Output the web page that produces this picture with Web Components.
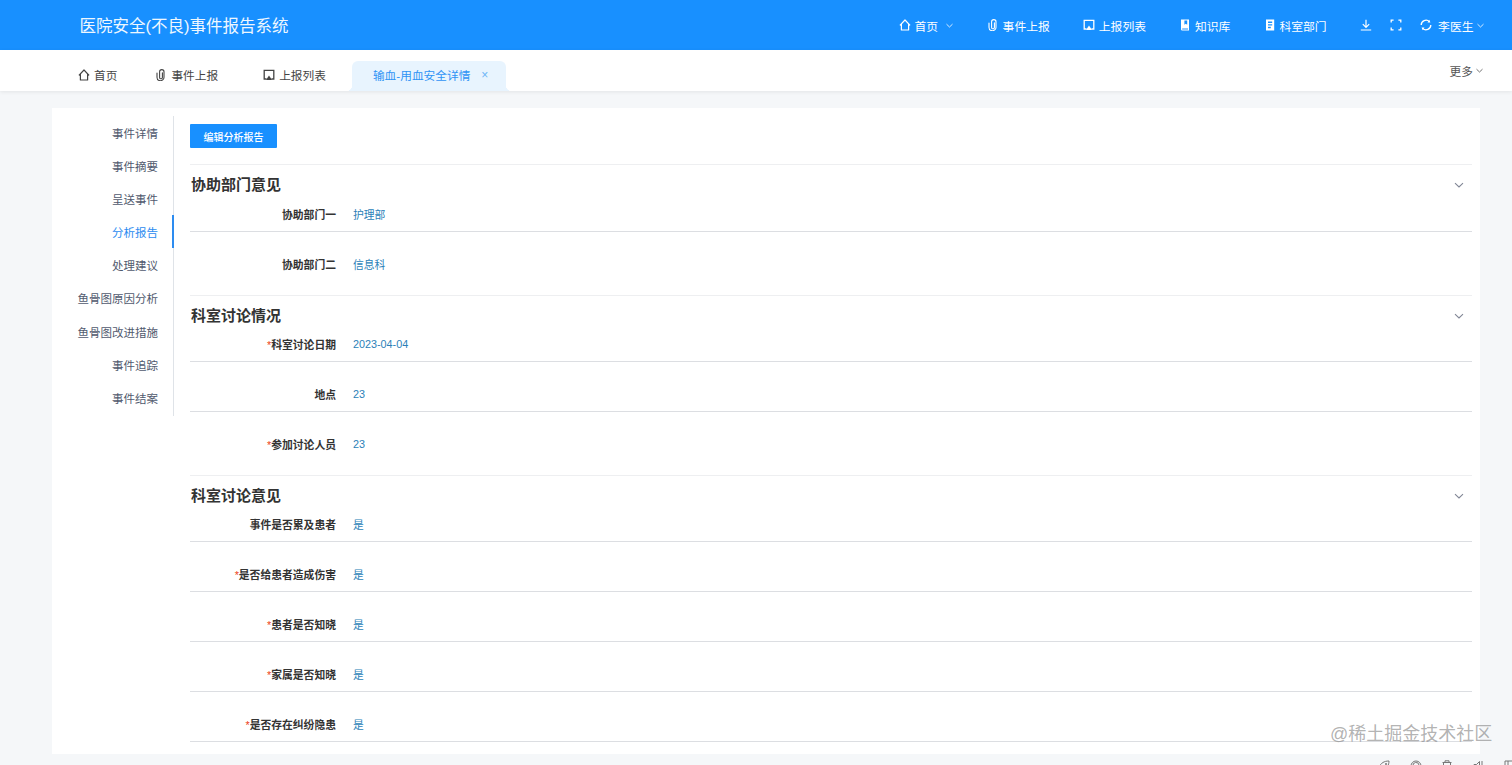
<!DOCTYPE html>
<html lang="zh-CN">
<head>
<meta charset="UTF-8">
<title>事件详情</title>
<style>
  html, body { margin: 0; height: 100%; overflow: hidden; }
  body { font-family: "Liberation Sans", "Noto Sans CJK SC", sans-serif; background: #f5f7f9; color: #333; }
</style>
</head>
<body>
<report-page>
  <app-header slot="header"></app-header>
  <tab-bar slot="tabs"></tab-bar>
  <anchor-nav slot="nav"></anchor-nav>

  <action-button>编辑分析报告</action-button>

  <form-section title="协助部门意见" class="first">
    <form-row label="协助部门一">护理部</form-row>
    <form-row label="协助部门二" last>信息科</form-row>
  </form-section>
  <form-section title="科室讨论情况">
    <form-row label="科室讨论日期" required>2023-04-04</form-row>
    <form-row label="地点">23</form-row>
    <form-row label="参加讨论人员" required last>23</form-row>
  </form-section>
  <form-section title="科室讨论意见">
    <form-row label="事件是否累及患者">是</form-row>
    <form-row label="是否给患者造成伤害" required>是</form-row>
    <form-row label="患者是否知晓" required>是</form-row>
    <form-row label="家属是否知晓" required>是</form-row>
    <form-row label="是否存在纠纷隐患" required>是</form-row>
  </form-section>
</report-page>

<script>
const ICONS = {
  home: '<path d="M.9 6.4 6 1l5.1 5.4M2.4 5v6h7.2V5" fill="none" stroke="currentColor" stroke-width="1.2" stroke-linejoin="round"/>',
  clip: '<path d="M7.4 3.8v4.6a1.4 1.4 0 0 1-2.8 0V2.8a2.2 2.2 0 0 1 4.4 0v5.4a3.5 3.5 0 0 1-7 0V4" fill="none" stroke="currentColor" stroke-width="1.1" stroke-linecap="round"/>',
  screen: '<path d="M3.6 10H1.2V1.4h9.6V10H8.4" fill="none" stroke="currentColor" stroke-width="1.3"/><path d="M6 6.6 9 11H3z" fill="currentColor"/>',
  book: '<path d="M2 .6h8v11H3.2A1.3 1.3 0 0 1 2 10.3zM5.4 1.6v4.2l1.4-1 1.4 1V1.6zM3.2 9.4v1h5.8v-1z" fill="currentColor" fill-rule="evenodd"/>',
  doc: '<path d="M2 .6h8.2v11H2zM4 2.6v1.4h4.2V2.6zM4 5.2v1.4h4.2V5.2zM4 7.8v1.4h2.8V7.8z" fill="currentColor" fill-rule="evenodd"/>',
  download: '<path d="M6 .8v7.6M2.8 5.2 6 8.4l3.2-3.2M.8 11h10.4" fill="none" stroke="currentColor" stroke-width="1.2"/>',
  full: '<path d="M1.2 3.6V1.2h2.4M8.4 1.2h2.4v2.4M10.8 8.4v2.4H8.4M3.6 10.8H1.2V8.4" fill="none" stroke="currentColor" stroke-width="1.3"/>',
  sync: '<path d="M1.2 6A4.8 4.8 0 0 1 9.4 2.6M10.800 6A4.8 4.8 0 0 1 2.600 9.400" fill="none" stroke="currentColor" stroke-width="1.3"/><path d="M9.300 .8l1.100 2.800-2.900-.2zM2.700 11.200 1.600 8.400l2.900.2z" fill="currentColor"/>',
  down: '<path d="M2 4.2 6 8l4-3.8" fill="none" stroke="currentColor" stroke-width="1.1"/>',
  rocket: '<path d="M1 7C3 3 6 1 11 1 11 5 9 8 5 10zM7.500 3.500h1v1h-1z" fill="none" stroke="currentColor"/>',
  badge: '<circle cx="6" cy="6" r="5" fill="none" stroke="currentColor"/><path d="M3 6a3 3 0 0 1 6-1" fill="none" stroke="currentColor"/>',
  trash: '<path d="M4 2V.8h4V2M1.500 2.500h9M2.500 2.500V11h7V2.500M5 5v4M7 5v4" fill="none" stroke="currentColor"/>',
  sound: '<path d="M1 4.500h2.500L6.500 1.500V11L3.500 8H1zM9 1v8" fill="none" stroke="currentColor"/>',
  panel: '<path d="M1 1h10v10H1zM4 1v10" fill="none" stroke="currentColor"/>'
};
const icon = (name, size = 12) =>
  `<svg width="${size}" height="${size}" viewBox="0 0 12 12" style="display:block;flex:none">${ICONS[name]}</svg>`;

class ReportPage extends HTMLElement {
  constructor() {
    super();
    this.attachShadow({mode: 'open'}).innerHTML = `
      <style>
        :host { display: flex; flex-direction: column; height: 765px; overflow: hidden; position: relative; }
        .main {
          flex: none; height: 646px; margin: 17px 32px 0 52px; padding: 8px;
          box-sizing: border-box; background: #fff; display: flex; overflow: hidden;
        }
        .body { flex: 1; padding: 8px 0 0 16px; min-width: 0; }
        .foot { flex: 1; display: flex; justify-content: flex-end; gap: 19.5px; padding: 6px 0 0; margin-right: -4px; color: #777; overflow: hidden; }
        .mark {
          position: absolute; left: 1330px; top: 723px; font-size: 18px; line-height: 22px;
          color: rgba(130,130,130,.62); white-space: nowrap;
        }
      </style>
      <slot name="header"></slot>
      <slot name="tabs"></slot>
      <div class="main">
        <slot name="nav"></slot>
        <div class="body"><slot></slot></div>
      </div>
      <div class="foot">
        ${['rocket','badge','trash','sound','panel'].map(n => icon(n)).join('')}
      </div>
      <div class="mark">@稀土掘金技术社区</div>`;
  }
}

class AppHeader extends HTMLElement {
  constructor() {
    super();
    const items = [['home','首页',true],['clip','事件上报'],['screen','上报列表'],['book','知识库'],['doc','科室部门']];
    this.attachShadow({mode: 'open'}).innerHTML = `
      <style>
        :host { display: flex; flex: none; align-items: center; height: 50px; background: #1890ff; color: #fff; padding: 0 27px 0 79.5px; }
        h1 { margin: 0 0 1px; font-size: 16.5px; font-weight: 400; color: #eef7ff; }
        nav { margin-left: auto; display: flex; align-items: center; gap: 33.5px; font-size: 11.8px; }
        a { display: flex; align-items: center; gap: 3.5px; }
        .chev { margin-left: 3px; }
        .tools { display: flex; align-items: center; gap: 18px; }
        .user { display: flex; align-items: center; gap: 6px; }
        .user .chev { margin-left: -3.5px; }
      </style>
      <h1>医院安全(不良)事件报告系统</h1>
      <nav>
        ${items.map(([i, t, c]) => `<a>${icon(i)}${t}${c ? `<span class="chev">${icon('down', 9)}</span>` : ''}</a>`).join('')}
        <div class="tools">
          ${icon('download')}${icon('full')}
          <div class="user">${icon('sync')}李医生<span class="chev">${icon('down', 9)}</span></div>
        </div>
      </nav>`;
  }
}

class TabBar extends HTMLElement {
  constructor() {
    super();
    this.attachShadow({mode: 'open'}).innerHTML = `
      <style>
        :host {
          display: flex; flex: none; align-items: flex-end; height: 41px; background: #fff; padding-left: 78px;
          font-size: 11.7px; color: #444; box-shadow: 0 1px 4px rgba(0,0,0,.08); position: relative;
        }
        .tab { height: 30px; display: flex; align-items: center; gap: 4px; padding-bottom: 3px; box-sizing: border-box; }
        .a { margin-right: 38px; }
        .b { margin-right: 45px; }
        .c { margin-right: 26px; }
        .on {
          position: relative; background: #e8f4fe; color: #2f93f5; padding-left: 21px; width: 154px;
          border-radius: 6px 6px 0 0; gap: 11px;
        }
        .on::before, .on::after { content: ""; position: absolute; bottom: 0; width: 6px; height: 6px; }
        .on::before { left: -6px; background: radial-gradient(circle at 0 0, transparent 6px, #e8f4fe 6.5px); }
        .on::after { right: -6px; background: radial-gradient(circle at 100% 0, transparent 6px, #e8f4fe 6.5px); }
        .x { font-size: 12px; color: #6cb4f7; line-height: 1; }
        .more { margin-left: auto; align-self: center; margin-right: 28px; display: flex; align-items: center; gap: 2px; color: #555; }
      </style>
      <div class="tab a">${icon('home')}首页</div>
      <div class="tab b">${icon('clip')}事件上报</div>
      <div class="tab c">${icon('screen')}上报列表</div>
      <div class="tab on">输血-用血安全详情<span class="x">×</span></div>
      <div class="more">更多${icon('down', 9)}</div>`;
  }
}

class AnchorNav extends HTMLElement {
  constructor() {
    super();
    const items = ['事件详情','事件摘要','呈送事件','分析报告','处理建议','鱼骨图原因分析','鱼骨图改进措施','事件追踪','事件结案'];
    this.attachShadow({mode: 'open'}).innerHTML = `
      <style>
        :host { display: block; flex: none; width: 113px; height: 300px; border-right: 1px solid #dfe3e8; font-size: 11.5px; color: #515a6e; }
        div { height: 33.1px; line-height: 37px; text-align: right; padding-right: 15px; }
        .on { color: #2d8cf0; margin-right: -1px; padding-right: 14px; border-right: 2px solid #2d8cf0; }
      </style>
      ${items.map((t, i) => `<div class="${i === 3 ? 'on' : ''}">${t}</div>`).join('')}`;
  }
}

class ActionButton extends HTMLElement {
  constructor() {
    super();
    this.attachShadow({mode: 'open'}).innerHTML = `
      <style>
        :host { display: block; margin-bottom: 16px; }
        button {
          display: block; width: 87px; height: 24px; padding: 0; border: 0; border-radius: 1px;
          background: #1890ff; color: #fff; font: 500 10px "Liberation Sans", "Noto Sans CJK SC", sans-serif;
        }
      </style>
      <button><slot></slot></button>`;
  }
}

class FormSection extends HTMLElement {
  constructor() {
    super();
    this.attachShadow({mode: 'open'}).innerHTML = `
      <style>
        :host { display: block; border-top: 1px solid #eeeff1; padding-bottom: 14px; }
        header { display: flex; align-items: center; justify-content: space-between; height: 31px; padding: 8px 7px 0 1px; box-sizing: border-box; }
        :host(.first) header { height: 32px; }
        h2 { margin: 0; font-size: 15px; font-weight: 600; color: #333; line-height: 20px; }
        span { color: #808695; }
      </style>
      <header><h2>${this.getAttribute('title')}</h2><span>${icon('down', 12)}</span></header>
      <slot></slot>`;
  }
}

class FormRow extends HTMLElement {
  constructor() {
    super();
    const star = this.hasAttribute('required') ? '<i>*</i>' : '';
    this.attachShadow({mode: 'open'}).innerHTML = `
      <style>
        :host { display: flex; align-items: center; height: 34px; margin-bottom: 15px; font-size: 10.8px; border-bottom: 1px solid #dcdee2; }
        :host([last]) { border-bottom: 0; margin-bottom: 0; }
        label { width: 146px; text-align: right; font-weight: 600; color: #333; margin-right: 17px; flex: none; }
        i { color: #ed4014; font-style: normal; font-weight: 400; }
        div { color: #2b7fb8; }
      </style>
      <label>${star}${this.getAttribute('label')}</label>
      <div><slot></slot></div>`;
  }
}

customElements.define('report-page', ReportPage);
customElements.define('app-header', AppHeader);
customElements.define('tab-bar', TabBar);
customElements.define('anchor-nav', AnchorNav);
customElements.define('action-button', ActionButton);
customElements.define('form-section', FormSection);
customElements.define('form-row', FormRow);
</script>
</body>
</html>
